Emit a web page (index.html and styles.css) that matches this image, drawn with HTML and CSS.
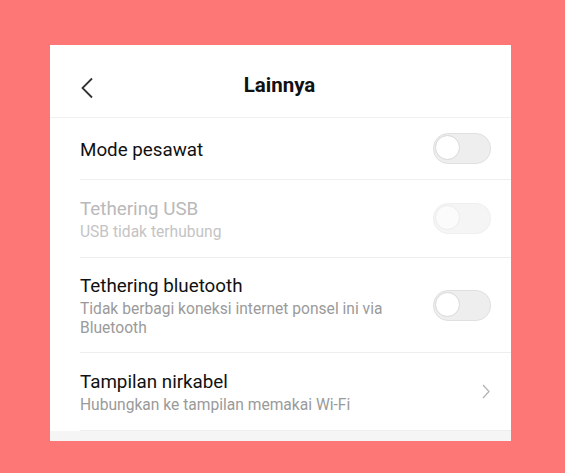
FILE: index.html
```html
<!DOCTYPE html>
<html lang="id">
<head>
    <meta charset="UTF-8">
    <meta name="viewport" content="width=device-width, initial-scale=1.0">
    <title>Lainnya</title>
    <link rel="stylesheet" href="styles.css">
</head>
<body>
    <div class="screen">
        <header class="topbar">
            <span class="back">
                <svg width="14" height="22" viewBox="0 0 14 22"><path d="M12 1.5 L2.5 11 L12 20.5" fill="none" stroke="#333" stroke-width="1.8"/></svg>
            </span>
            <h1>Lainnya</h1>
        </header>
        <ul class="list">
            <li class="item single">
                <div class="text">
                    <div class="title">Mode pesawat</div>
                </div>
                <span class="switch"></span>
            </li>
            <li class="item disabled">
                <div class="text">
                    <div class="title">Tethering USB</div>
                    <div class="sub">USB tidak terhubung</div>
                </div>
                <span class="switch"></span>
            </li>
            <li class="item tall">
                <div class="text">
                    <div class="title">Tethering bluetooth</div>
                    <div class="sub">Tidak berbagi koneksi internet ponsel ini via<br>Bluetooth</div>
                </div>
                <span class="switch"></span>
            </li>
            <li class="item">
                <div class="text">
                    <div class="title">Tampilan nirkabel</div>
                    <div class="sub">Hubungkan ke tampilan memakai Wi-Fi</div>
                </div>
                <svg class="arrow" width="8" height="15" viewBox="0 0 8 15"><path d="M1 1 L7 7.5 L1 14" fill="none" stroke="#b5b5b5" stroke-width="1.3"/></svg>
            </li>
        </ul>
        <div class="footer"></div>
    </div>
</body>
</html>
```

FILE: styles.css
```css
body { margin: 0; background: #fe7777; font-family: Roboto, "Noto Sans", sans-serif; }
.screen { width: 461px; margin: 45px 0 0 50px; background: #fff; }
.topbar { height: 73px; position: relative; display: flex; align-items: center; justify-content: center; padding-top: 7px; border-bottom: 1px solid #f1f1f1; box-sizing: border-box; }
.topbar h1 { margin: 0 0 0 -2px; font-size: 20.5px; font-weight: 700; color: #111; }
.back { position: absolute; left: 30px; top: 32px; }
.list { list-style: none; margin: 0; padding: 0 0 0 30px; }
.item { display: flex; align-items: center; justify-content: space-between; padding-right: 20px; border-bottom: 1px solid #eeeeee; height: 78px; box-sizing: border-box; }
.item .text { padding-top: 3px; }
.item.single { height: 62px; }
.item.tall { height: 95px; }
.title { font-size: 18.8px; color: #111; line-height: 23px; }
.sub { font-size: 15.6px; color: #9a9a9a; line-height: 19px; margin-top: 2px; }
.disabled .title { color: #b9b9b9; }
.disabled .sub { color: #c4c4c4; }
.switch { width: 56px; height: 29px; border-radius: 15px; background: #eeeeee; border: 1px solid #e0e0e0; position: relative; flex-shrink: 0; }
.switch::after { content: ""; position: absolute; left: 1px; top: 1px; width: 25px; height: 25px; border-radius: 50%; background: #fff; border: 1px solid #d8d8d8; box-sizing: border-box; }
.disabled .switch { background: #f5f5f5; border-color: #efefef; }
.disabled .switch::after { border-color: #ececec; background: #fbfbfb; }
.arrow { margin-right: 1px; }
.footer { height: 10px; background: #f5f5f5; }
```
